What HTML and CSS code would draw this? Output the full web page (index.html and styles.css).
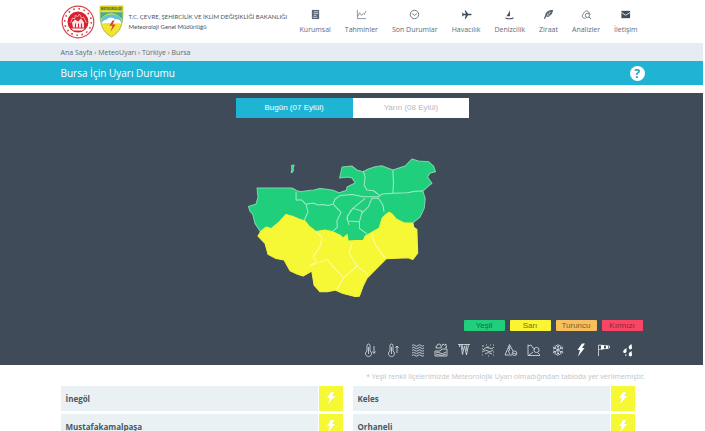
FILE: index.html
```html
<!DOCTYPE html>
<html lang="tr">
<head>
<meta charset="utf-8">
<meta name="viewport" content="width=device-width, initial-scale=1">
<title>Bursa İçin Uyarı Durumu</title>
<link rel="stylesheet" href="styles.css">
</head>
<body>
<header class="header">
  <div class="wrap header-row">
    <a class="brand" href="#">
      <svg class="seal" viewBox="0 0 34 34" aria-hidden="true">
        <circle cx="17" cy="17" r="15.8" fill="#fff" stroke="#d9434c" stroke-width="1.2"/>
        <circle cx="17" cy="17" r="13.3" fill="none" stroke="#d9434c" stroke-width="1.6" stroke-dasharray="1.6 3.62"/>
        <circle cx="17" cy="17" r="10.500" fill="#d8232f"/>
        <path d="M9.500 18l2-5 2 1 1-4 2 2 2-3 2 4 2-1 3 6" fill="none" stroke="#f0a5aa" stroke-width="1"/>
        <path d="M11 17.500l3-3 3 2 3-3 3 4v5h-2v-4h-1v4h-2v-4h-1v4h-2v-4h-1v4h-2z" fill="#fbe3e4"/>
        <path d="M10 23.500h14l-3 2h-8z" fill="#fff"/>
      </svg>
      <svg class="shield" viewBox="0 0 24 32" aria-hidden="true">
        <path d="M1 1h22v7c0 11-2 18-11 23C3 26 1 19 1 8z" fill="#f3e430" stroke="#7d9a3c" stroke-width=".6"/>
        <path d="M1 1h22v5H1z" fill="#d9d52a"/>
        <path d="M1.500 14V7h21v7c-3-4-7-6-10.500-6S4 10 1.500 14z" fill="#3fae9c"/>
        <path d="M2 17c0-5 4-8 10-8s10 3 10 8c-5 2-7 0-10 1s-6 1-10-1z" fill="#62c3d8"/>
        <path d="M2.500 18c1-4 4-3 6-5 3-2 6 0 7 1 3-1 6 1 6 4z" fill="#fff"/>
        <path d="M13 15l-3 5h3l-2 6 5-7h-3l2-4z" fill="#d9432f"/>
        <text x="12" y="4.800" text-anchor="middle" class="shield-text">METEOROLOJİ</text>
      </svg>
      <span class="brand-text"><span>T.C. ÇEVRE, ŞEHİRCİLİK VE İKLİM DEĞİŞİKLİĞİ BAKANLIĞI</span><span>Meteoroloji Genel Müdürlüğü</span></span>
    </a>
    <nav class="nav" aria-label="Ana menü">
      <a href="#"><svg viewBox="0 0 12 12"><path d="M2 1h8v10H2z" fill="#5a6675"/><path d="M4 3h5M4 5h5M4 7h3M3 9h5" stroke="#fff" stroke-width=".7"/></svg>Kurumsal</a>
      <a href="#"><svg viewBox="0 0 12 12" fill="none" stroke="#697482" stroke-width=".8"><path d="M1.500 1v9.500H11M2 8l2-4 2 3 2-2 1 1 2-4"/></svg>Tahminler</a>
      <a href="#"><svg viewBox="0 0 12 12" fill="none" stroke="#596473" stroke-width=".9"><circle cx="6" cy="6" r="4.600"/><path d="M3.500 5l2.500 2 2.500-2"/></svg>Son Durumlar</a>
      <a href="#"><svg viewBox="0 0 12 12" fill="#424d5b"><path d="M11 5.200c.8.500.8 1.100 0 1.600H7.700L5.200 10.500H4L5.200 6.800H3L2 8H1l.6-2L1 4h1l1 1.200h2.200L4 1.500h1.200l2.500 3.700z"/></svg>Havacılık</a>
      <a href="#"><svg viewBox="0 0 12 12" fill="#424d5b"><path d="M6.500 1v7H2.500C4 6 5.500 4 6.500 1z"/><path d="M1.500 8.600c2 2 6 2 9 .4l-.5 1.500c-3 .8-6.500.8-8 0z"/></svg>Denizcilik</a>
      <a href="#"><svg viewBox="0 0 12 12" fill="#4d5968"><path d="M11 1C6 1 3 3 2.500 6.500L1 10.500l1 .5 1.500-2.500C7.500 9 10 6 11 1z"/><path d="M3 8.500L9 3M5 7l-.4-3M7 5.200L6.700 2.500M5.500 6.800h3" stroke="#fff" stroke-width=".5"/></svg>Ziraat</a>
      <a href="#"><svg viewBox="0 0 12 12" fill="none" stroke="#596473" stroke-width=".9"><path d="M5 10H3.500A2.500 2.500 0 0 1 2 6c1-1 2-4 4-4s3 2 4 4"/><circle cx="7" cy="7" r="2.300"/><path d="M8.700 8.700L11 11"/></svg>Analizler</a>
      <a href="#"><svg viewBox="0 0 12 12"><path d="M1.500 2h9.500v8H1.500z" fill="#424d5b"/><path d="M1.500 3.800l4.700 3L11 3.800" fill="none" stroke="#fff" stroke-width=".9"/></svg>İletişim</a>
    </nav>
  </div>
</header>
<nav class="crumbs" aria-label="Sayfa yolu"><div class="wrap"><a href="#">Ana Sayfa</a> › <a href="#">MeteoUyarı</a> › <a href="#">Türkiye</a> › <a href="#">Bursa</a></div></nav>
<div class="titlebar"><div class="wrap title-row"><h1>Bursa İçin Uyarı Durumu</h1><button class="help" type="button" aria-label="Yardım">?</button></div></div>
<main>
  <section class="stage">
    <div class="wrap">
      <div class="tabs"><button class="tab active" type="button">Bugün (07 Eylül)</button><button class="tab" type="button">Yarın (08 Eylül)</button></div>
      <svg class="map" viewBox="247 158 210 140" role="img" aria-label="Bursa ilçeleri uyarı haritası">
        <path class="green" d="M257 188L292 188 297 190.700 301 191.700 306.500 190.700 314 190 319.500 188.500 327 189.300 333 190.300 339 192.700 346 190.500 347 187 355 183 352 178 348 177 339.500 178 342 167 351.700 166 356.700 170 362.700 171.700 368.300 169 375 166.700 381.700 165.700 386.700 167.700 392.700 170 405 166 408.300 162.700 411.700 159 418.300 161 428.300 161.700 433.300 166 435.300 171.700 430 173 427.300 177 431.700 183.300 427 187 422.700 191 425 198.300 424 208.300 420 216.700 412.700 222.700 400 240 300 250 262 240 260 231 255 223.300 252.700 214 250 211 248.500 206.500 256 204 258 197z"/>
        <path class="green" d="M291.500 165.500l2.500-.5-1 3.500.5 2-1.500 2h-.8l.6-3.500z"/>
        <path class="yellow" d="M258 236L261 231 266 227 271 228.500 279 222 286 214.300 293 216.500 300 219.500 305 221 309 226 316 231.500 325 230 332 231.500 340 235 343 238 347 234.500 348 241 356 240.500 363 240.500 365 236 371 232.500 379 228 382 218 386 214 389 212 392 214 396 219 404 223 412.700 223 413.500 227 416.700 229.300 417.500 253 412.700 259.300 408 257.700 386 258.700 378 266.700 366.700 278.300 363 286 359.300 296 355 296.300 343 293.300 335 290 327 291.500 320 291.700 314 285 311.700 271 303 276 297 274 290 270.700 284 260 276 258.500 268 254.300 265 243.300z"/>
        <path class="line" d="M296 192L296 200 301.700 200 306 204.300 313 203 318 205 323 204.500 328 205.500 333 204 335 199 340 195.500 352 194.500 363 196.700 378 196.700 382 194 393 193.300 407 192.700 415 191.300 422.700 191"/>
        <path class="line" d="M306 204.300L308 211.700 304.300 220M333 204L341 212.300 336.700 221 337.300 227 333 231M351 210L346.700 218 349 225M365 198.300L352.700 208.300 347.300 216 347.300 221 359.300 221.700 361.700 213 361.700 211 352.700 208.300M361.700 213L368.300 206.700 371.700 198.300 378.300 198.300 382.700 205 384 212M359.300 221.700L359.300 228.300 367 234M363.300 171.700L365 177 364 185 366.700 190 373.300 190.700 379.300 195M392.700 170L393.300 183 392.700 193"/>
        <path class="pale" d="M316 231.500l6 6-2 9-7 10 3 5-7 5M309 266l18-6.500 6 7 10 10M336 290l8-13 6-5 7-6M352 243l-3 10 8 13 8 6 3 3M371 233l5 13 9 12"/>
      </svg>
      <div class="legend"><span class="is-green">Yeşil</span><span class="is-yellow">Sarı</span><span class="is-orange">Turuncu</span><span class="is-red">Kırmızı</span></div>
      <div class="hazards">
        <svg viewBox="0 0 14 14"><path d="M3 8V2.500a1.500 1.500 0 0 1 3 0V8a3 3 0 1 1-3 0zM4.500 4v7M10 3v7M8.500 8.500L10 10.500l1.500-2"/></svg>
        <svg viewBox="0 0 14 14"><path d="M3 8V2.500a1.500 1.500 0 0 1 3 0V8a3 3 0 1 1-3 0zM4.500 4v7M10 10V3M8.500 5L10 3l1.500 2"/></svg>
        <svg viewBox="0 0 14 14"><path d="M1 2.500q1.500-1.500 3 0t3 0 3 0 3 0M1 5q1.500-1.500 3 0t3 0 3 0 3 0M1 7.500q1.500-1.500 3 0t3 0 3 0 3 0M1 10q1.500-1.500 3 0t3 0 3 0 3 0M1 12.500q1.500-1.500 3 0t3 0 3 0 3 0"/></svg>
        <svg viewBox="0 0 14 14"><path d="M2 5a1.500 1.500 0 0 1 1-2 2 2 0 0 1 4 0 1.500 1.500 0 0 1 0 2zM8 3l1-2 1.500 1L12 1v2l1 1-2 1M1 8h5l2-2h5v7H1zM2 10q2-2 4 0t6-1M2 12q2-1 4 0t6-1"/></svg>
        <svg viewBox="0 0 14 14"><path d="M1 1.500h12M2.500 1.500V4M4 1.500l1.500 10L7.500 3l2 9L11.500 1.500M5 1.500L6 7M9 1.500L10 8"/></svg>
        <svg viewBox="0 0 14 14"><path d="M2 7q3-4 6-2t5-1M1 9q4-3 6-1t5-1M4 11q3-3 7 0"/><path d="M1 3h2M5 2h1M9 2h1M12 2h1M1 12h1M7 13h1M12 12h1M6 4h2M1 6h1M12 9h1"/></svg>
        <svg viewBox="0 0 14 14"><path d="M1 12L5.500 1.500 9 8M1 12h7M4 5l2 2-2 1 2 3M5 3l1 3"/><circle cx="10.500" cy="10.300" r="2.300"/><path d="M9 10l3 1"/></svg>
        <svg viewBox="0 0 14 14"><path d="M1 1.500v11h12M1 3l3-1 2 3 2 1M2 12l4-3"/><circle cx="9.500" cy="7" r="2.600"/><path d="M11 10l2 2"/></svg>
        <svg viewBox="0 0 14 14"><path d="M7 1v12M1.800 4l10.400 6M1.800 10l10.400-6M5 2l2 2 2-2M5 12l2-2 2 2M2 6l2.500-.8L4 2.500M12 8l-2.500.8.5 2.700M2 8l2.500.8-.5 2.700M12 6l-2.500-.8.500-2.700"/></svg>
        <svg viewBox="0 0 14 14"><path class="solid" d="M8 .5L3.500 7H6l-2 6.500L10.500 5H8l3-4.500z"/></svg>
        <svg viewBox="0 0 14 14"><path d="M1.500 13V2M1.500 2l11 1v2L1.500 6.500"/><path class="solid" d="M4 2l3 .5V6L4 6.500zM9 2.500l2 .5v2.500L9 6z"/></svg>
        <svg viewBox="0 0 14 14"><path class="solid" d="M10.500 1c-3 2-3 3-2.500 4.500s3 1 3-.5zM5.500 5C2 7 2 8.500 2.500 9.500s3 .5 3-1zM10.500 8c-3 2-3 3-2.500 4.500s3 1 3-.5zM5 10.500l-1 2 1.500.5z"/></svg>
      </div>
    </div>
  </section>
  <section class="wrap results">
    <p class="note">* Yeşil renkli ilçelerimizde Meteorolojik Uyarı olmadığından tabloda yer verilmemiştir.</p>
    <ul class="districts">
      <li><span>İnegöl</span><svg viewBox="0 0 24 25"><path d="M12 6l-4 6h3l-2 6 7-8h-3l2-4z"/></svg></li>
      <li><span>Keles</span><svg viewBox="0 0 24 25"><path d="M12 6l-4 6h3l-2 6 7-8h-3l2-4z"/></svg></li>
      <li><span>Mustafakamalpaşa</span><svg viewBox="0 0 24 25"><path d="M12 6l-4 6h3l-2 6 7-8h-3l2-4z"/></svg></li>
      <li><span>Orhaneli</span><svg viewBox="0 0 24 25"><path d="M12 6l-4 6h3l-2 6 7-8h-3l2-4z"/></svg></li>
    </ul>
  </section>
</main>
</body>
</html>
```
FILE: styles.css
```css
* { box-sizing: border-box; }
html { overflow: hidden; }
body { margin: 0; background: #fff; color: #4b5663; font: 7px/10px "Open Sans", sans-serif; }
a { color: inherit; text-decoration: none; }
button { font: inherit; border: 0; padding: 0; }
.wrap { max-width: 584px; margin: 0 auto; }
.header-row { display: flex; justify-content: space-between; height: 43px; padding-right: 7px; }
.brand { display: flex; align-items: center; }
.seal { width: 34px; height: 34px; }
.shield { width: 25px; height: 33px; margin-left: 4px; }
.shield-text { font: bold 3px "Open Sans", sans-serif; fill: #44502a; }
.brand-text { display: flex; flex-direction: column; margin-left: 5px; font: 6px/10px Lato, sans-serif; white-space: nowrap; }
.nav { display: flex; gap: 14px; padding-top: 9px; color: #626b77; }
.nav a { display: flex; flex-direction: column; align-items: center; gap: 5px; white-space: nowrap; }
.nav svg { width: 11px; height: 11px; }
.crumbs { padding-top: 2px; background: #e6ecf1; box-shadow: inset -2px 0 #fff; line-height: 16px; color: #626b77; }
.titlebar { background: #20b4d4; box-shadow: inset -2px 0 #fff; color: #fff; }
.title-row { display: flex; align-items: center; justify-content: space-between; height: 24px; }
h1 { margin: 0; font-size: 10px; line-height: 14px; font-weight: 400; }
.help { width: 15px; height: 15px; border-radius: 50%; background: #fff; color: #20a3c0; font-size: 12px; line-height: 15px; font-weight: 700; }
.stage { margin-top: 8px; padding: 5px 0 8px; background: #3f4b58; box-shadow: inset -2px 0 #fff; }
.tabs { display: grid; grid-template-columns: 1fr 1fr; width: 40%; margin: 0 auto; }
.tab { height: 20px; background: #fff; color: #b5babf; font: 8px/20px "Liberation Sans", sans-serif; }
.tab.active { background: #20b4d4; color: #fff; }
.map { display: block; width: 36%; margin: 40px auto 0; }
.map path { stroke-width: 1; stroke-linejoin: round; }
.map .green { fill: #1fcf7c; stroke: #7fd6ae; }
.map .yellow { fill: #f6f735; stroke: #f6f735; }
.map .line { fill: none; stroke: #a4e9c8; }
.map .pale { fill: none; stroke: #fbfba9; }
.legend { display: flex; justify-content: flex-end; gap: 5px; margin: 22px 2px 0 0; font: 8px/11px "Liberation Sans", sans-serif; text-align: center; }
.legend span { width: 41px; border-radius: 1px; }
.is-green { background: #1fcf7c; color: #1b6b4a; }
.is-yellow { background: #fbf432; color: #736f26; }
.is-orange { background: #f8c05c; color: #7c6034; }
.is-red { background: #fb4565; color: #8b2638; }
.hazards { display: grid; grid-template-columns: repeat(12, 1fr); width: 280px; margin: 12px 5px 0 auto; justify-items: center; }
.hazards svg { width: 14px; height: 14px; fill: none; stroke: #dfe3e7; stroke-width: .8; }
.hazards .solid { fill: #fff; stroke: none; }
.note { margin: 7px 0 4px; text-align: right; color: #c3c7cb; font: 7px/10px "Noto Sans", sans-serif; }
.districts { display: grid; grid-template-columns: 1fr 1fr; gap: 3px 10px; margin: 0; padding: 0 10px 0 0; list-style: none; }
.districts li { display: flex; align-items: center; justify-content: space-between; height: 25px; padding-left: 5px; background: #eaf1f5; font-size: 8px; font-weight: 700; }
.districts svg { width: 25px; height: 25px; background: #f6f735; fill: #fff; border-left: 1px solid #fff; }
```
